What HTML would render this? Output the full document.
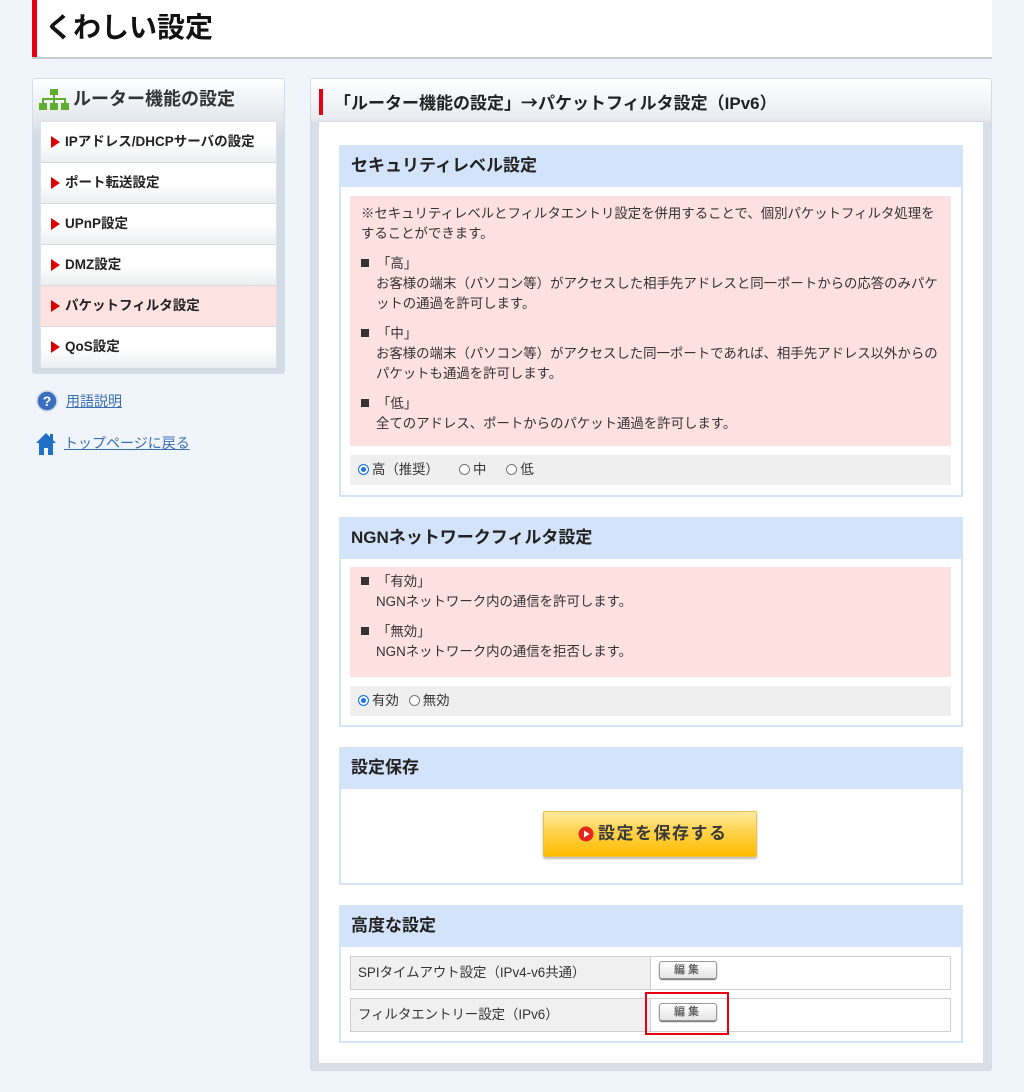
<!DOCTYPE html>
<html><head><meta charset="utf-8">
<style>
*{margin:0;padding:0;box-sizing:border-box}
body{width:1024px;height:1092px;background:#f0f5fc;font-family:"Liberation Sans","Noto Sans CJK JP",sans-serif;color:#333;position:relative;overflow:hidden}
.a{position:absolute}
.nw{white-space:nowrap}
.hdr{left:32px;top:0;width:960px;height:59px;background:#fff;border-bottom:2px solid #c8ccd2}
.hdr .bar{left:0;top:0;width:5px;height:57px;background:#e60012}
.hdr h1{left:13px;top:8px;font-size:28px;font-weight:bold;color:#111;line-height:40px}
.side{left:32px;top:78px;width:253px;height:296px;border:1px solid #d6dde6;border-radius:3px;background:linear-gradient(#fff,#e3e8ee 40px,#d3dbe4 60px,#d3dbe4)}
.side .tt{left:40px;top:8px;font-size:18px;font-weight:bold;color:#333;line-height:24px}
.menu{left:7px;top:42px;width:237px;height:246px;border:1px solid #dde2e8;background:#fff}
.mi{position:absolute;left:0;width:235px;height:41px;border-bottom:1px solid #d6dadf;background:linear-gradient(#fff 50%,#eceeef);font-size:13.5px;font-weight:bold;color:#222;line-height:40px;padding-left:24px}
.mi:before{content:"";position:absolute;left:10px;top:14px;border-left:9px solid #d00;border-top:6px solid transparent;border-bottom:6px solid transparent}
.mi.on{background:#fde2e2}
.lnk{font-size:14px;color:#3a6eb0;text-decoration:underline;line-height:18px}
.main{left:310px;top:78px;width:682px;height:993px;border:1px solid #d6dce4;border-radius:3px;background:linear-gradient(#fff,#e8ecf0 40px,#d8dfe7 44px,#d8dfe7)}
.main .rb{left:8px;top:10px;width:4px;height:26px;background:#e60012}
.main .tt{left:23px;top:10px;font-size:17px;font-weight:bold;color:#222;line-height:26px}
.inner{left:7px;top:42px;width:666px;height:943px;background:#fff;border:1px solid #d8dde3}
.sec{position:absolute;left:339px;width:624px;border:2px solid #d3e4f8;background:#fff}
.sh{position:absolute;left:0;top:0;width:100%;height:40px;background:#d3e4fa;font-size:17px;font-weight:bold;color:#222;line-height:38px;padding-left:10px}
.pink{position:absolute;left:9px;width:601px;background:#fde0e0;font-size:13.4px;line-height:20px;color:#333}
.gray{position:absolute;left:9px;width:601px;height:30px;background:#efefef;font-size:13.4px;line-height:30px}
.rad{display:inline-block;width:11px;height:11px;border:1px solid #777;border-radius:50%;vertical-align:-1px;margin-right:3px;background:#fff}
.rad.on{border:1px solid #1a73e8;box-shadow:inset 0 0 0 2px #fff;background:#1a73e8}
.sq{display:inline-block;width:8px;height:8px;background:#333;margin-right:8px;vertical-align:1px}
.row{position:absolute;left:9px;width:601px;height:34px;border:1px solid #cfcfcf;background:#fff}
.row .l{position:absolute;left:0;top:0;width:300px;height:32px;background:#f0f0f0;border-right:1px solid #cfcfcf;font-size:13.4px;line-height:32px;padding-left:7px}
.eb{position:absolute;left:308px;top:4px;width:58px;height:18px;border:1px solid #999;border-radius:3px;background:linear-gradient(#fff,#e6e6e6);box-shadow:0 1px 1px #666;font-size:11px;font-weight:bold;color:#666;text-align:center;line-height:16px;letter-spacing:3px}
.cjk{font-family:"Noto Sans CJK JP",sans-serif}
</style></head><body>

<div class="a hdr"><div class="a bar"></div><h1 class="a nw">くわしい設定</h1></div>

<div class="a side">
 <svg class="a" style="left:6px;top:10px" width="30" height="22" viewBox="0 0 30 22"><g fill="#5fad2c"><rect x="11" y="0" width="8" height="6"/><rect x="14" y="6" width="2" height="4"/><rect x="3" y="9" width="24" height="2"/><rect x="3" y="9" width="2" height="5"/><rect x="25" y="9" width="2" height="5"/><rect x="14" y="9" width="2" height="5"/><rect x="0" y="14" width="8" height="7"/><rect x="11" y="14" width="8" height="7"/><rect x="22" y="14" width="8" height="7"/></g></svg>
 <div class="a tt nw">ルーター機能の設定</div>
 <div class="a menu">
  <div class="mi" style="top:0">IPアドレス/DHCPサーバの設定</div>
  <div class="mi" style="top:41px">ポート転送設定</div>
  <div class="mi" style="top:82px">UPnP設定</div>
  <div class="mi" style="top:123px">DMZ設定</div>
  <div class="mi on" style="top:164px">パケットフィルタ設定</div>
  <div class="mi" style="top:205px;border-bottom:none">QoS設定</div>
 </div>
</div>

<svg class="a" style="left:36px;top:390px" width="22" height="22" viewBox="0 0 22 22"><circle cx="11" cy="11" r="10" fill="#3a6fc0" stroke="#cfd8e6" stroke-width="1.5"/><text x="11" y="16" text-anchor="middle" font-size="14" font-weight="bold" fill="#fff" font-family="Liberation Sans">?</text></svg>
<div class="a lnk nw" style="left:66px;top:392px">用語説明</div>
<svg class="a" style="left:35px;top:432px" width="22" height="24" viewBox="0 0 22 24"><path d="M11 1 L1 11 L4 11 L4 23 L9 23 L9 16 L13 16 L13 23 L18 23 L18 11 L21 11 Z" fill="#2170c8"/><rect x="15" y="2" width="3" height="6" fill="#2170c8"/></svg>
<div class="a lnk nw" style="left:64px;top:434px">トップページに戻る</div>

<div class="a main">
 <div class="a rb"></div>
 <div class="a tt nw">「ルーター機能の設定」<span class="cjk">→</span>パケットフィルタ設定（IPv6）</div>
 <div class="a inner"></div>
</div>

<div class="sec" style="top:145px;height:352px">
 <div class="sh">セキュリティレベル設定</div>
 <div class="pink" style="top:49px;height:250px;padding:8px 0 0 11px">
  <div class="nw">※セキュリティレベルとフィルタエントリ設定を併用することで、個別パケットフィルタ処理を</div>
  <div class="nw">することができます。</div>
  <div class="nw" style="margin-top:10px"><span class="sq"></span>「高」</div>
  <div class="nw" style="padding-left:15px">お客様の端末（パソコン等）がアクセスした相手先アドレスと同一ポートからの応答のみパケ</div>
  <div class="nw" style="padding-left:15px">ットの通過を許可します。</div>
  <div class="nw" style="margin-top:10px"><span class="sq"></span>「中」</div>
  <div class="nw" style="padding-left:15px">お客様の端末（パソコン等）がアクセスした同一ポートであれば、相手先アドレス以外からの</div>
  <div class="nw" style="padding-left:15px">パケットも通過を許可します。</div>
  <div class="nw" style="margin-top:10px"><span class="sq"></span>「低」</div>
  <div class="nw" style="padding-left:15px">全てのアドレス、ポートからのパケット通過を許可します。</div>
 </div>
 <div class="gray nw" style="top:308px;padding-left:8px"><span class="rad on"></span>高（推奨）<span style="display:inline-block;width:20px"></span><span class="rad"></span>中<span style="display:inline-block;width:20px"></span><span class="rad"></span>低</div>
</div>

<div class="sec" style="top:517px;height:210px">
 <div class="sh">NGNネットワークフィルタ設定</div>
 <div class="pink" style="top:48px;height:110px;padding:5px 0 0 11px">
  <div class="nw"><span class="sq"></span>「有効」</div>
  <div class="nw" style="padding-left:15px">NGNネットワーク内の通信を許可します。</div>
  <div class="nw" style="margin-top:10px"><span class="sq"></span>「無効」</div>
  <div class="nw" style="padding-left:15px">NGNネットワーク内の通信を拒否します。</div>
 </div>
 <div class="gray nw" style="top:167px;padding-left:8px"><span class="rad on"></span>有効<span style="display:inline-block;width:10px"></span><span class="rad"></span>無効</div>
</div>

<div class="sec" style="top:747px;height:138px">
 <div class="sh">設定保存</div>
 <div class="a" style="left:202px;top:62px;width:214px;height:46px;border:1px solid #f0c040;border-radius:2px;background:linear-gradient(#ffeaa0,#ffd24a 45%,#ffbc00);box-shadow:0 2px 2px #bbb"></div>
 <svg class="a" style="left:237px;top:77px" width="16" height="16" viewBox="0 0 16 16"><circle cx="8" cy="8" r="7.5" fill="#e5261c"/><path d="M6 4.5 L11.5 8 L6 11.5 Z" fill="#fff"/></svg>
 <div class="a nw" style="left:257px;top:72px;font-size:17px;font-weight:bold;color:#3a3a3a;letter-spacing:1.5px;line-height:26px">設定を保存する</div>
</div>

<div class="sec" style="top:905px;height:138px">
 <div class="sh">高度な設定</div>
 <div class="row" style="top:49px"><div class="l nw">SPIタイムアウト設定（IPv4-v6共通）</div><div class="eb">編集</div></div>
 <div class="row" style="top:91px"><div class="l nw">フィルタエントリー設定（IPv6）</div><div class="eb">編集</div></div>
</div>

<div class="a" style="left:645px;top:992px;width:84px;height:43px;border:2px solid #e60012"></div>

</body></html>
